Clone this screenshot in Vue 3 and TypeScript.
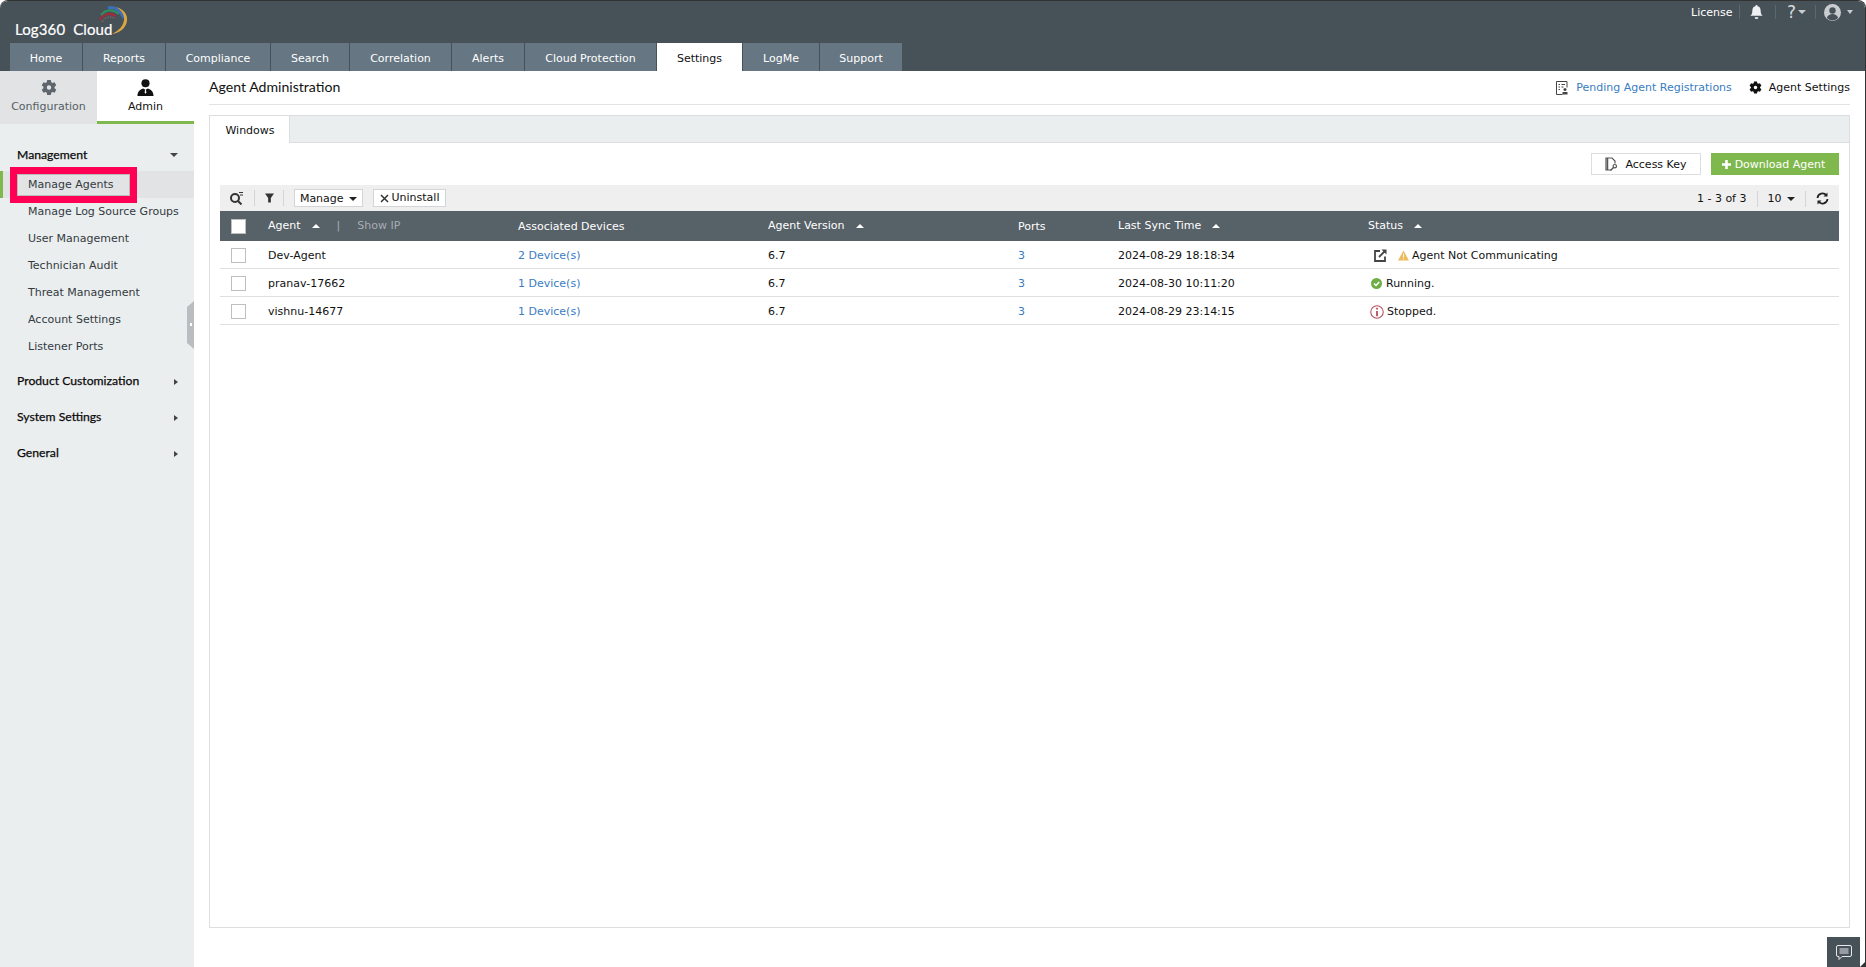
<script setup lang="ts">
const tabs = ['Home','Reports','Compliance','Search','Correlation','Alerts','Cloud Protection','Settings','LogMe','Support']
const widths: Record<string, number> = { Home:73, Reports:83, Compliance:105, Search:79, Correlation:102, Alerts:73, 'Cloud Protection':132, Settings:86, LogMe:77, Support:83 }
const subItems = ['Manage Log Source Groups','User Management','Technician Audit','Threat Management','Account Settings','Listener Ports']
const closed = ['Product Customization','System Settings','General']
const rows = [
  { name:'Dev-Agent', dev:'2 Device(s)', time:'2024-08-29 18:18:34', status:'Agent Not Communicating', kind:'warn' },
  { name:'pranav-17662', dev:'1 Device(s)', time:'2024-08-30 10:11:20', status:'Running.', kind:'ok' },
  { name:'vishnu-14677', dev:'1 Device(s)', time:'2024-08-29 23:14:15', status:'Stopped.', kind:'stop' },
]
const gear = 'M9.800 .5H6.200l-.5 2.300c-.4.2-.7.4-1 .6L2.500 2.700.7 5.800l1.700 1.500v1.400L.7 10.200l1.800 3.100 2.200-.7c.3.200.6.400 1 .6l.5 2.300h3.600l.5-2.300c.4-.2.700-.4 1-.6l2.200.7 1.800-3.100-1.700-1.500V7.300l1.700-1.500-1.800-3.100-2.200.7c-.3-.2-.6-.4-1-.6zM8 5.800a2.200 2.200 0 1 1 0 4.400 2.200 2.200 0 0 1 0-4.400z'
</script>

<template>
  <div class="app">
    <header class="top">
      <div class="brand">
        <span class="logo-text">Log360&nbsp; Cloud</span>
        <svg class="logo-arc" width="50" height="40" viewBox="90 0 50 40" fill="none">
          <path d="M100 20C103 14 110 12 116 16" stroke="#a32a3c" stroke-width="2.200"/>
          <path d="M102 22C105 17 110 16 114 18" stroke="#d8808c" stroke-width=".8" stroke-dasharray="1 1.500"/>
          <path d="M101 15C106 9 113 9 119 14" stroke="#2f8f5f" stroke-width="2.200"/>
          <path d="M108 8C114 6 120 10 124 18" stroke="#3b6fb8" stroke-width="3"/>
          <path d="M116 7C124 9 128 15 127 21 126 28 120 33 112 34 118 31 123 27 124 20 125 15 121 10 116 7z" fill="#dca63f"/>
        </svg>
      </div>
      <div class="utils">
        <span class="license">License</span>
        <span class="usep s1"></span>
        <svg class="bell" width="13" height="15" viewBox="0 0 14 16" fill="#eef0f1"><path d="M7 0a1.200 1.200 0 0 1 1.200 1.200c2.400.5 3.300 2.400 3.300 4.800 0 3 .8 4.300 2.200 5.600H.3C1.700 10.300 2.500 9 2.500 6c0-2.400.9-4.300 3.300-4.800A1.200 1.200 0 0 1 7 0zM5 13h4a2 2 0 0 1-4 0z"/></svg>
        <span class="usep s2"></span>
        <span class="help">?</span><span class="caret-light c1"></span>
        <span class="usep s3"></span>
        <svg class="user" width="17" height="17" viewBox="0 0 17 17"><circle cx="8.500" cy="8.500" r="8.500" fill="#c9cdd0"/><circle cx="8.500" cy="6.500" r="3.200" fill="#475158"/><path d="M2.800 14c1-3 3.400-4 5.700-4s4.700 1 5.700 4a8 8 0 0 1-11.400 0z" fill="#475158"/></svg>
        <span class="caret-light c2"></span>
      </div>
      <nav class="tabs">
        <a v-for="t in tabs" :key="t" class="tab" :class="{ on: t === 'Settings' }" :style="{ width: widths[t] + 'px' }">{{ t }}</a>
      </nav>
    </header>

    <div class="body">
      <aside class="side">
        <div class="modes">
          <div class="mode cfg">
            <svg width="16" height="16" viewBox="0 0 16 16" fill="#5d666c"><path :d="gear"/></svg>
            <span>Configuration</span>
          </div>
          <div class="mode adm">
            <svg width="17" height="18" viewBox="0 0 18 18" fill="#111"><circle cx="9" cy="4.500" r="4.300"/><path d="M.5 18c0-4.500 2.500-7 6-8l2.500 1.500L11.500 10c3.500 1 6 3.500 6 8z"/><path d="M8.500 11h1l.4 3.500-.9 1-.9-1z" fill="#fff"/></svg>
            <span>Admin</span>
          </div>
        </div>
        <div class="group open"><span>Management</span><i class="cd big"></i></div>
        <div class="item sel">Manage Agents</div>
        <div v-for="s in subItems" :key="s" class="item">{{ s }}</div>
        <div v-for="c in closed" :key="c" class="group shut"><span>{{ c }}</span><i class="cr"></i></div>
        <div class="redbox"></div>
        <div class="handle"><i></i></div>
      </aside>

      <main class="main">
        <div class="head">
          <h1>Agent Administration</h1>
          <div class="links">
            <svg width="12" height="14" viewBox="0 0 12 14" fill="none" stroke="#444"><path d="M6.500 13.500H.5V.5h10.500v6"/><path d="M2.500 3.500h1.500M5.500 3.500h3.500M2.500 6h1.500M5.500 6h2M2.500 8.500h1.500"/><circle cx="9" cy="8.500" r="1.500" fill="#444" stroke="none"/><path d="M6.500 13.500v-2.500h5v2.500z" fill="#444" stroke="none"/></svg>
            <a class="pending">Pending Agent Registrations</a>
            <svg class="settings-ico" width="13" height="13" viewBox="0 0 16 16" fill="#111"><path :d="gear"/></svg>
            <span>Agent Settings</span>
          </div>
        </div>

        <section class="panel">
          <div class="ptabs"><span class="ptab">Windows</span></div>
          <div class="actions">
            <button class="btn key">
              <svg width="13" height="14" viewBox="0 0 13 14" fill="none" stroke="#555" stroke-width="1.200"><path d="M6 13H1V1h6l3 3v2.500"/><path d="M2.500 1v12" stroke-width="1.500"/><circle cx="9.800" cy="9.200" r="1.700"/><path d="M8.500 10.500 5.500 13.500" stroke-width="1.400"/></svg>
              Access Key
            </button>
            <button class="btn dl">
              <svg width="9" height="9" viewBox="0 0 9 9" fill="#fff"><path d="M3.200 0h2.600v3.200H9v2.600H5.800V9H3.200V5.800H0V3.200h3.200z"/></svg>
              Download Agent
            </button>
          </div>
          <div class="toolbar">
            <svg class="t-search" width="15" height="14" viewBox="0 0 15 14" fill="none" stroke="#333" stroke-width="2"><circle cx="6" cy="7" r="4"/><path d="m9 10 3.500 3.500"/><path d="M10 1.500h4M11 4h3" stroke-width="1"/></svg>
            <i class="tsep s-a"></i>
            <svg class="t-filter" width="9" height="10" viewBox="0 0 10 10" fill="#333"><path d="M0 0h10L6.500 5v5h-3V5z"/></svg>
            <i class="tsep s-b"></i>
            <span class="tbtn mg">Manage <i class="cd dark"></i></span>
            <span class="tbtn un"><svg width="9" height="9" viewBox="0 0 9 9" stroke="#333" stroke-width="1.500"><path d="m1 1 7 7M8 1 1 8"/></svg>Uninstall</span>
            <div class="pager">
              <span>1 - 3 of 3</span><i class="tsep"></i>
              <span>10 <i class="cd dark"></i></span><i class="tsep"></i>
              <svg width="13" height="13" viewBox="0 0 13 13" fill="none" stroke="#222" stroke-width="1.800"><path d="M1.500 6A5 5 0 0 1 10.500 3.500M11.500 7A5 5 0 0 1 2.500 9.500"/><path d="M11.500 0.500v4h-4z" fill="#222" stroke="none"/><path d="M1.500 12.500v-4h4z" fill="#222" stroke="none"/></svg>
            </div>
          </div>
          <div class="grid thead">
            <div class="c0"><span class="cb white"></span></div>
            <div class="agent-h"><span>Agent</span><i class="cu"></i><em class="bar">|</em><em class="ip">Show IP</em></div>
            <div class="low">Associated Devices</div>
            <div><span>Agent Version</span><i class="cu"></i></div>
            <div class="low">Ports</div>
            <div><span>Last Sync Time</span><i class="cu"></i></div>
            <div><span>Status</span><i class="cu"></i></div>
          </div>
          <div v-for="r in rows" :key="r.name" class="grid row">
            <div class="c0"><span class="cb"></span></div>
            <div>{{ r.name }}</div>
            <div><a>{{ r.dev }}</a></div>
            <div>6.7</div>
            <div><a>3</a></div>
            <div>{{ r.time }}</div>
            <div class="st">
              <template v-if="r.kind === 'warn'">
                <svg class="ext" width="13" height="13" viewBox="0 0 13 13" fill="none" stroke="#444" stroke-width="1.800"><path d="M6 2H1v10h10V7.500"/><path d="M5 8 11 2"/><path d="M7.500 0.500h5v5z" fill="#444" stroke="none"/></svg>
                <svg width="11" height="11" viewBox="0 0 12 11"><path d="M6 0 12 11H0z" fill="#eebb5f"/><path d="M6 3.500v4M6 8.500v1.200" stroke="#fff" stroke-width="1.100"/></svg>
              </template>
              <svg v-else-if="r.kind === 'ok'" class="okic" width="11" height="11" viewBox="0 0 11 11"><circle cx="5.500" cy="5.500" r="5.500" fill="#70ad47"/><path d="m3 5.500 2 2 3.200-3.500" stroke="#fff" stroke-width="1.500" fill="none"/></svg>
              <svg v-else class="stopic" width="14" height="14" viewBox="0 0 13 13"><circle cx="6.500" cy="6.500" r="5.800" fill="none" stroke="#b9505f" stroke-width="1"/><path d="M6.500 5.500v5M6.500 2.500v1.600" stroke="#b9505f" stroke-width="1.700"/></svg>
              <span>{{ r.status }}</span>
            </div>
          </div>
        </section>
      </main>
    </div>

    <button class="chat">
      <svg width="16" height="15" viewBox="0 0 16 15" fill="none" stroke="#e6e8ea"><path d="M2 .5h12a1.500 1.500 0 0 1 1.500 1.500v8a1.500 1.500 0 0 1-1.500 1.500H6l-3 3v-3H2A1.500 1.500 0 0 1 .5 10V2A1.500 1.500 0 0 1 2 .5z"/><path d="M3.500 4h9M3.500 6h9M3.500 8h9"/></svg>
    </button>
    <i class="corner"></i>
  </div>
</template>

<style scoped>
.app { position: relative; width: 1866px; height: 967px; overflow: hidden; background: #fff; box-sizing: border-box; border-top: 1px solid #333; border-right: 1px solid #333; border-radius: 8px 8px 0 0; font: 11px "DejaVu Sans", Verdana, sans-serif; color: #111; display: flex; flex-direction: column; }
.top { position: relative; height: 70px; background: #475158; flex: none; display: flex; flex-direction: column; justify-content: flex-end; }
.brand { position: absolute; left: 15px; top: 3px; height: 36px; }
.logo-text { position: absolute; left: 0; top: 16px; color: #fff; font: 15px/18px "Lato", sans-serif; letter-spacing: .12px; -webkit-text-stroke: .2px #fff; white-space: nowrap; }
.logo-arc { position: absolute; left: 75px; top: -4px; }
.utils { position: absolute; right: 12px; top: 2px; height: 18px; display: flex; align-items: center; color: #fff; }
.license { font-size: 11px; width: 40px; white-space: nowrap; }
.usep { width: 1px; height: 14px; background: #5d676e; }
.s1 { margin: 0 10px 0 8px; }
.s2 { margin: 0 11px 0 12px; }
.s3 { margin: 0 8px 0 9px; }
.help { color: #d7dadc; font-size: 17px; width: 8px; line-height: 18px; }
.caret-light { width: 0; height: 0; border: 3px solid transparent; border-top: 4px solid #c9cdd0; border-bottom: 0; }
.c1 { margin-left: 3px; border-left-width: 4px; border-right-width: 4px; }
.c2 { margin-left: 6px; }
.tabs { display: flex; padding-left: 10px; height: 28px; }
.tab { box-sizing: border-box; background: #667682; color: #fff; border-right: 1px solid #475158; text-align: center; line-height: 31px; font-size: 11px; }
.tab.on { background: #fff; color: #111; }
.body { flex: 1; display: flex; min-height: 0; }
.side { position: relative; width: 194px; background: #ebeeef; flex: none; }
.modes { display: flex; height: 53px; margin-bottom: 22px; }
.mode { width: 97px; box-sizing: border-box; display: flex; flex-direction: column; align-items: center; padding-top: 8px; gap: 4px; font-size: 11px; }
.mode svg { height: 17px; }
.cfg { background: #e1e3e4; color: #555e64; }
.adm { background: #fff; border-bottom: 3px solid #7fb94d; }
.group { display: flex; justify-content: space-between; align-items: center; padding: 0 16px 0 17px; height: 36px; font: 400 12.200px "Lato", sans-serif; color: #0a0a0a; -webkit-text-stroke: .25px #0a0a0a; }
.group.open { height: 25px; margin-top: -4px; margin-bottom: 4px; }
.item { height: 27px; line-height: 28px; padding-left: 28px; font-size: 11px; color: #333b41; white-space: nowrap; }
.item.sel { background: #e1e3e4; border-left: 3px solid #7fb94d; padding-left: 25px; }
.item + .group { margin-top: 2px; }
.cd, .cu, .cr { display: inline-block; width: 0; height: 0; }
.cd { border: 3.500px solid transparent; border-top: 4px solid #444; border-bottom: 0; }
.cd.big { border-width: 4px 4px 0; border-top-color: #444; }
.cd.dark { border-width: 4px 4px 0; border-top-color: #222; vertical-align: 1px; margin-left: 2px; }
.cr { border: 3.500px solid transparent; border-left: 4px solid #444; border-right: 0; margin-top: 3px; }
.cu { border: 4px solid transparent; border-bottom: 4.500px solid #fff; border-top: 0; margin-left: 11px; vertical-align: 1px; }
.redbox { position: absolute; left: 10px; top: 96px; width: 127px; height: 36px; box-sizing: border-box; border: 7px solid #ff0055; outline: 1px solid #bbb; outline-offset: -8px; }
.handle { position: absolute; right: 0; top: 230px; width: 7px; height: 48px; background: #b9bdc0; clip-path: polygon(0 6px, 100% 0, 100% 100%, 0 calc(100% - 6px)); }
.handle i { position: absolute; left: 3px; top: 22px; width: 2px; height: 3px; background: #fff; }
.main { flex: 1; min-width: 0; padding: 0 15px 39px; display: flex; flex-direction: column; }
.head { height: 34px; display: flex; align-items: center; justify-content: space-between; border-bottom: 1px solid #e1e3e4; margin-bottom: 10px; flex: none; padding-bottom: 3px; box-sizing: border-box; }
h1 { margin: 0; font: 400 14.100px "Lato", sans-serif; color: #111; }
.links { display: flex; align-items: center; gap: 8px; font-size: 11px; margin-top: 3px; }
.pending { color: #3a7cc0; }
.settings-ico { margin-left: 9px; }
.links span { margin-left: -1px; }
.panel { flex: 1; border: 1px solid #dcdedf; position: relative; }
.ptabs { height: 26px; background: #ebeeef; border-bottom: 1px solid #dcdedf; }
.ptab { display: inline-block; width: 80px; height: 27px; line-height: 29px; padding-left: 1px; text-align: center; background: #fff; border-right: 1px solid #dcdedf; box-sizing: border-box; }
.actions { display: flex; justify-content: flex-end; gap: 10px; padding: 10px; }
.btn { height: 22px; font: 11px "DejaVu Sans", sans-serif; border: 0; padding: 0; box-sizing: border-box; display: flex; align-items: center; justify-content: center; }
.key { width: 110px; background: #fff; border: 1px solid #dcdedf; color: #111; gap: 7px; }
.dl { width: 128px; background: #7fb94d; color: #fff; gap: 4px; padding-right: 3px; }
.toolbar { margin: 0 10px; height: 26px; background: #efefef; display: flex; align-items: center; padding: 0 10px 0 9px; box-sizing: border-box; }
.tsep { display: inline-block; width: 1px; height: 16px; background: #d3d5d6; }
.s-a { margin: 0 10px; }
.s-b { margin: 0 10px 0 9px; }
.tbtn { height: 18px; line-height: 18px; border: 1px solid #d3d5d6; background: #fff; box-sizing: border-box; }
.mg { width: 69px; text-align: center; margin-right: 10px; }
.un { width: 73px; display: flex; align-items: center; justify-content: center; gap: 3px; }
.pager { margin-left: auto; display: flex; align-items: center; gap: 10px; padding-top: 1px; }
.grid { margin: 0 10px; display: grid; grid-template-columns: 48px 250px 250px 250px 100px 250px 1fr; align-items: center; }
.c0 { display: flex; padding-left: 11px; }
.cb { width: 15px; height: 15px; box-sizing: border-box; border: 1px solid #bdbfc0; background: #fff; }
.thead { height: 30px; background: #576168; color: #fff; }
.low { padding-top: 1px; }
.thead > div:not(.low):not(.c0) { margin-top: -1px; }
.agent-h em { font-style: normal; }
.bar { color: #a7adb1; margin-left: 17px; }
.ip { color: #a7adb1; margin-left: 17px; }
.row { height: 28px; padding-top: 2px; border-bottom: 1px solid #dedfe0; box-sizing: border-box; }
.row a { color: #3a7cc0; }
.st { display: flex; align-items: center; gap: 3px; }
.ext { margin: 0 8px 0 6px; }
.okic { margin: 0 1px 0 3px; }
.stopic { margin: 1px 0 0 2px; }
.chat { position: absolute; right: 5px; bottom: 0; width: 33px; height: 30px; border: 0; padding: 0; background: #475158; display: flex; align-items: center; justify-content: center; }
.corner { position: absolute; right: 0; bottom: 0; width: 5px; height: 5px; background: #333; clip-path: polygon(100% 0, 100% 100%, 0 100%); }
</style>

<style>
html, body { margin: 0; background: #fff; }
</style>
